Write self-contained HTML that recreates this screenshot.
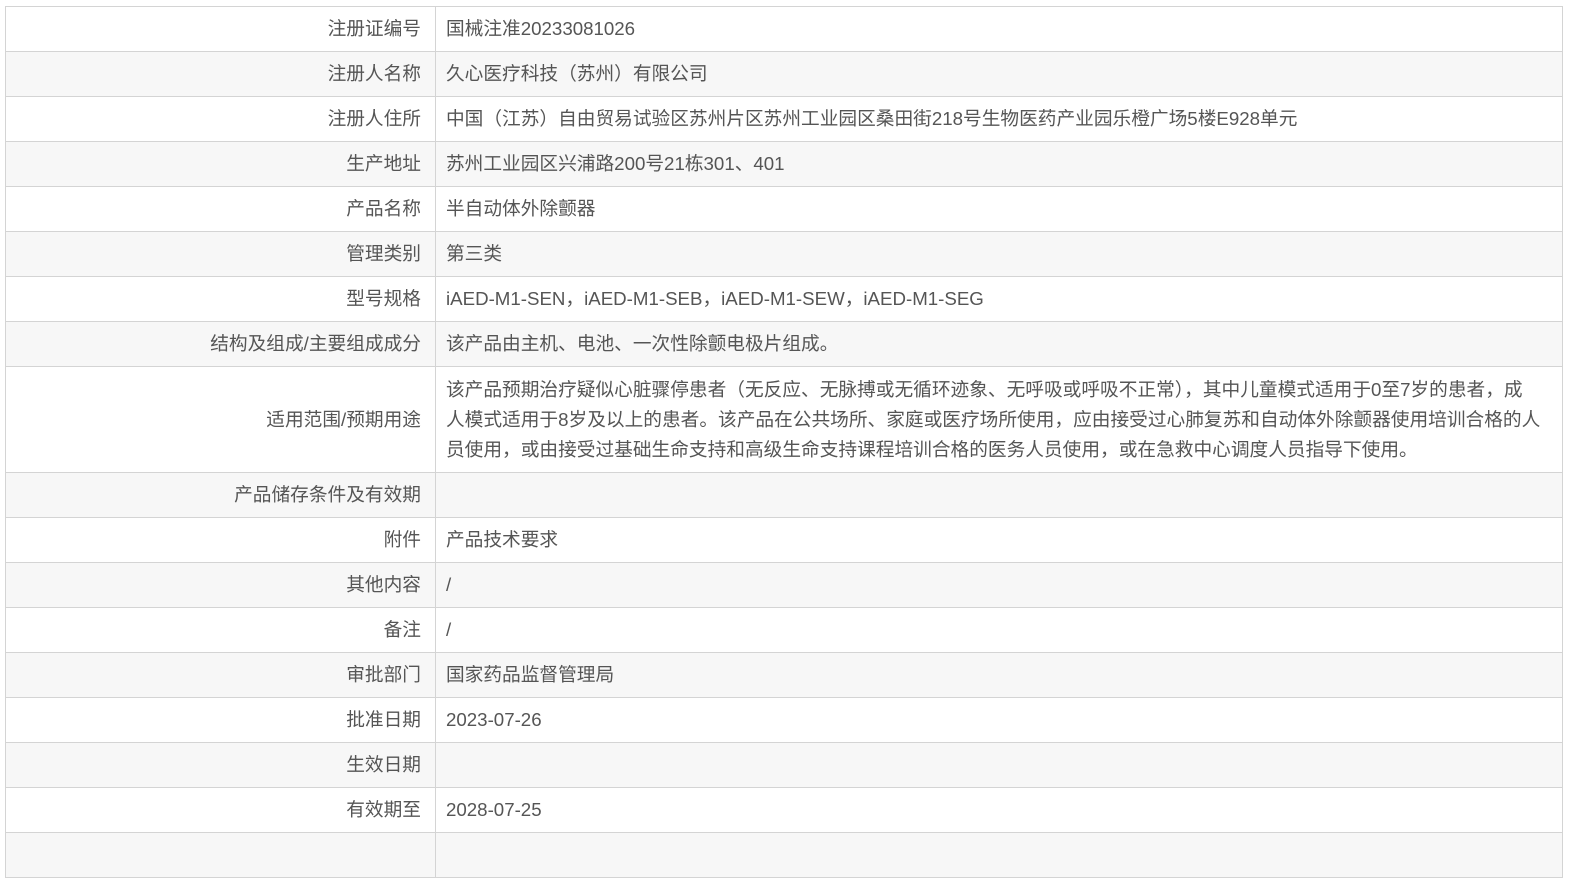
<!DOCTYPE html>
<html><head><meta charset="utf-8"><style>
html,body{margin:0;padding:0;background:#fff;width:1587px;height:847px;overflow:hidden}
table{position:absolute;left:5px;top:6px;width:1558px;border-collapse:collapse;table-layout:fixed;font-family:"Liberation Sans","Noto Sans CJK SC",sans-serif;font-size:18.7px;color:#555}
td{border:1px solid #d4d4d4;height:45px;padding:0 10px;box-sizing:border-box;line-height:30px;overflow:hidden}
td.l{width:430px;text-align:right;padding-right:14px}
tr:nth-child(even) td{background:#f7f7f7}
tr.m td{height:106px;padding-top:7px;padding-bottom:7px}
</style></head><body>
<table>
<tr><td class="l">注册证编号</td><td>国械注准20233081026</td></tr>
<tr><td class="l">注册人名称</td><td>久心医疗科技（苏州）有限公司</td></tr>
<tr><td class="l">注册人住所</td><td>中国（江苏）自由贸易试验区苏州片区苏州工业园区桑田街218号生物医药产业园乐橙广场5楼E928单元</td></tr>
<tr><td class="l">生产地址</td><td>苏州工业园区兴浦路200号21栋301、401</td></tr>
<tr><td class="l">产品名称</td><td>半自动体外除颤器</td></tr>
<tr><td class="l">管理类别</td><td>第三类</td></tr>
<tr><td class="l">型号规格</td><td>iAED-M1-SEN，iAED-M1-SEB，iAED-M1-SEW，iAED-M1-SEG</td></tr>
<tr><td class="l">结构及组成/主要组成成分</td><td>该产品由主机、电池、一次性除颤电极片组成。</td></tr>
<tr class="m"><td class="l">适用范围/预期用途</td><td>该产品预期治疗疑似心脏骤停患者（无反应、无脉搏或无循环迹象、无呼吸或呼吸不正常），其中儿童模式适用于0至7岁的患者，成<br>人模式适用于8岁及以上的患者。该产品在公共场所、家庭或医疗场所使用，应由接受过心肺复苏和自动体外除颤器使用培训合格的人<br>员使用，或由接受过基础生命支持和高级生命支持课程培训合格的医务人员使用，或在急救中心调度人员指导下使用。</td></tr>
<tr><td class="l">产品储存条件及有效期</td><td></td></tr>
<tr><td class="l">附件</td><td>产品技术要求</td></tr>
<tr><td class="l">其他内容</td><td>/</td></tr>
<tr><td class="l">备注</td><td>/</td></tr>
<tr><td class="l">审批部门</td><td>国家药品监督管理局</td></tr>
<tr><td class="l">批准日期</td><td>2023-07-26</td></tr>
<tr><td class="l">生效日期</td><td></td></tr>
<tr><td class="l">有效期至</td><td>2028-07-25</td></tr>
<tr><td class="l">&nbsp;</td><td></td></tr>
</table>
</body></html>
